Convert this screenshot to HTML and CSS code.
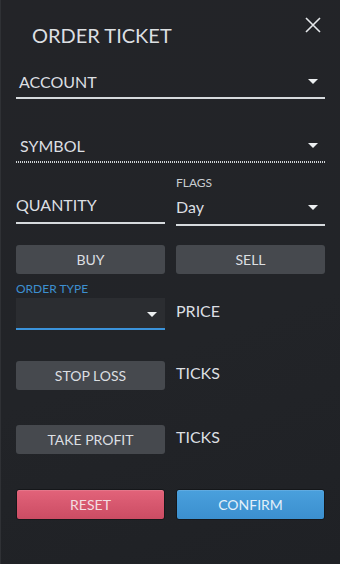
FILE: index.html
```html
<!DOCTYPE html>
<html lang="en">
<head>
    <meta charset="UTF-8">
    <meta name="viewport" content="width=device-width, initial-scale=1.0">
    <title>Order Ticket</title>
    <link rel="stylesheet" href="styles.css">
</head>
<body>
    <div class="ticket">
        <div class="header">
            <h1>ORDER TICKET</h1>
            <span class="close">
                <svg width="16" height="16" viewBox="0 0 16 16">
                    <path d="M1 1L15 15M15 1L1 15" stroke="#e4e7ea" stroke-width="1.6" fill="none"/>
                </svg>
            </span>
        </div>

        <div class="field select account">
            <span class="value">ACCOUNT</span>
            <span class="caret"></span>
        </div>

        <div class="field select symbol disabled">
            <span class="value">SYMBOL</span>
            <span class="caret"></span>
        </div>

        <div class="row qty-row">
            <div class="col">
                <div class="field quantity">
                    <span class="value">QUANTITY</span>
                </div>
            </div>
            <div class="col">
                <div class="label">FLAGS</div>
                <div class="field select flags">
                    <span class="value">Day</span>
                    <span class="caret"></span>
                </div>
            </div>
        </div>

        <div class="row side-row">
            <button class="btn">BUY</button>
            <button class="btn">SELL</button>
        </div>

        <div class="row type-row">
            <div class="col">
                <div class="label active">ORDER TYPE</div>
                <div class="field select order-type">
                    <span class="value"></span>
                    <span class="caret"></span>
                </div>
            </div>
            <div class="col">
                <div class="side-text price">PRICE</div>
            </div>
        </div>

        <div class="row bracket-row">
            <div class="col"><button class="btn">STOP LOSS</button></div>
            <div class="col"><div class="side-text">TICKS</div></div>
        </div>

        <div class="row bracket-row">
            <div class="col"><button class="btn">TAKE PROFIT</button></div>
            <div class="col"><div class="side-text">TICKS</div></div>
        </div>

        <div class="row action-row">
            <button class="btn reset">RESET</button>
            <button class="btn confirm">CONFIRM</button>
        </div>
    </div>
</body>
</html>
```

FILE: styles.css
```css
* { box-sizing: border-box; }
html, body {
    margin: 0;
    height: 100%;
}
body {
    font-family: Lato, "Open Sans", sans-serif;
    background: linear-gradient(160deg, #232428 0%, #222428 60%, #1f2125 100%);
    border-left: 1px solid #2f3135;
    color: #dcdfe2;
}
.ticket {
    padding: 0 15px 0 15px;
}
.header {
    height: 60px;
    display: flex;
    justify-content: space-between;
    align-items: flex-start;
}
.header h1 {
    margin: 23px 0 0 16px;
    font-size: 20px;
    line-height: 24px;
    font-weight: 400;
    color: #dcdfe2;
}
.close {
    margin: 17px 4px 0 0;
    width: 16px;
    height: 16px;
}
.close svg { display: block; }

.field {
    display: flex;
    align-items: flex-end;
    justify-content: space-between;
    font-size: 16px;
    line-height: 20px;
    padding-bottom: 5px;
    border-bottom: 2px solid #d6dadd;
}
.field .value { color: #dcdfe2; }
.caret {
    width: 0;
    height: 0;
    border-left: 5px solid transparent;
    border-right: 5px solid transparent;
    border-top: 5px solid #eceff1;
    margin: 0 7px 8px 0;
}
.account {
    height: 39px;
    padding-left: 3px;
}
.symbol {
    margin-top: 25px;
    height: 39px;
    padding-left: 4px;
    border-bottom: none;
    padding-bottom: 7px;
    background: repeating-linear-gradient(90deg, #cfd3d6 0 1px, transparent 1px 2px) left bottom / 100% 2px no-repeat;
}

.row {
    display: flex;
    gap: 11px;
}
.col {
    flex: 1;
    display: flex;
    flex-direction: column;
}
.label {
    font-size: 12px;
    line-height: 14px;
    color: #c9cdd1;
}
.label.active { color: #3d8fd0; }

.qty-row {
    height: 63px;
    align-items: flex-end;
}
.qty-row .col:first-child { margin-bottom: 2px; }
.quantity {
    padding-bottom: 7px;
}
.flags {
    margin-top: 7px;
    padding-bottom: 7px;
}
.flags .caret { margin-bottom: 7px; }

.btn {
    font-family: inherit;
    font-size: 14px;
    color: #dcdfe2;
    background: #46494e;
    border: none;
    border-radius: 3px;
    height: 29px;
    padding: 0;
    flex: 1;
    cursor: pointer;
}
.side-row {
    margin-top: 19px;
}

.type-row {
    margin-top: 8px;
}
.order-type {
    margin-top: 2px;
    height: 32px;
    align-items: center;
    padding: 0;
    background: #2b2d31;
    border-bottom: 2px solid #3b93da;
}
.order-type .caret { margin: 2px 8px 0 0; }
.side-text {
    font-size: 16px;
    line-height: 20px;
    color: #dcdfe2;
}
.price { margin-top: 19px; }

.bracket-row {
    margin-top: 31px;
}
.bracket-row + .bracket-row { margin-top: 35px; }
.bracket-row .btn { flex: none; width: 100%; }
.bracket-row .side-text { margin-top: 2px; }

.action-row {
    margin-top: 35px;
}
.action-row .btn {
    height: 31px;
    border: 1px solid #15171a;
    border-radius: 3px;
}
.reset {
    background: linear-gradient(#e2637a, #cb4c63);
    color: #f3dde1;
    box-shadow: inset 0 1px 0 rgba(255,255,255,0.12);
}
.confirm {
    background: linear-gradient(#4aa0dd, #3b8fce);
    color: #e3f0fa;
    box-shadow: inset 0 1px 0 rgba(255,255,255,0.12);
}
```
